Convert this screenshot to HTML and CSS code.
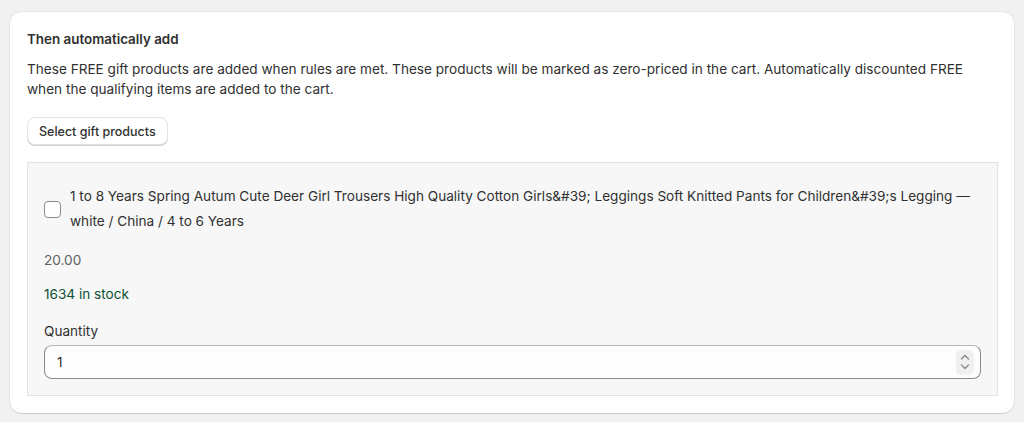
FILE: index.html
```html
<!DOCTYPE html>
<html lang="en">
<head>
  <meta charset="UTF-8">
  <title>Gift products</title>
  <link rel="stylesheet" href="styles.css">
</head>
<body>
  <div class="card">
    <h2 class="card-title">Then automatically add</h2>
    <p class="card-text">These FREE gift products are added when rules are met. These products will be marked as zero-priced in the cart. Automatically discounted FREE when the qualifying items are added to the cart.</p>
    <button class="select-button">Select gift products</button>

    <div class="gift-box">
      <label class="gift-item">
        <span class="checkbox"></span>
        <span class="gift-name">1 to 8 Years Spring Autum Cute Deer Girl Trousers High Quality Cotton Girls&amp;#39; Leggings Soft Knitted Pants for Children&amp;#39;s Legging — white / China / 4 to 6 Years</span>
      </label>
      <div class="gift-price">20.00</div>
      <div class="gift-stock">1634 in stock</div>
      <div class="field-label">Quantity</div>
      <div class="number-field">
        <input class="number-input" type="text" value="1">
        <span class="spinner">
          <svg width="14" height="22" viewBox="0 0 14 22" fill="none" stroke="#8a8a8a" stroke-width="1.4" stroke-linecap="round" stroke-linejoin="round">
            <path d="M3.5 8 L7 4.5 L10.5 8"/>
            <path d="M3.5 14 L7 17.5 L10.5 14"/>
          </svg>
        </span>
      </div>
    </div>
  </div>
</body>
</html>
```

FILE: styles.css
```css
body {
  margin: 0;
  padding: 12px 10px 9px;
  background-color: #f1f1f1;
  color: #303030;
  font-family: Inter, 'Noto Sans', sans-serif;
  font-size: 13.6px;
}

.card {
  background: #ffffff;
  border-radius: 12px;
  box-shadow: 0 1px 0 rgba(0, 0, 0, 0.12), 0 0 0 1px rgba(0, 0, 0, 0.04);
  padding: 17px 16px 17px 17px;
}

.card-title {
  margin: 0;
  font-size: 13.4px;
  font-weight: 600;
  line-height: 20px;
}

.card-text {
  margin: 10px 0 0;
  line-height: 20px;
  padding-right: 20px;
}

.select-button {
  margin-top: 18px;
  height: 28px;
  padding: 0 11px;
  font-family: inherit;
  font-size: 12.5px;
  font-weight: 500;
  color: #303030;
  background: #ffffff;
  border: 1px solid #e3e3e3;
  border-radius: 8px;
  box-shadow: 0 1px 0 #cfcfcf;
  cursor: pointer;
}

.gift-box {
  margin-top: 17px;
  background: #f7f7f7;
  border: 1px solid #e3e3e3;
  padding: 21px 16px 16px;
}

.gift-item {
  display: flex;
  align-items: center;
  gap: 9px;
}

.checkbox {
  flex: none;
  width: 15px;
  height: 15px;
  border: 1px solid #8a8a8a;
  border-radius: 4px;
  background: #ffffff;
}

.gift-name {
  line-height: 25px;
  color: #303030;
}

.gift-price {
  margin-top: 16px;
  line-height: 20px;
  color: #616161;
}

.gift-stock {
  margin-top: 14px;
  line-height: 20px;
  color: #0c5132;
}

.field-label {
  margin-top: 17px;
  line-height: 20px;
}

.number-field {
  margin-top: 4px;
  display: flex;
  align-items: center;
  height: 32px;
  background: #fdfdfd;
  border: 1px solid #8a8a8a;
  border-top-color: #b5b5b5;
  border-radius: 8px;
  padding: 0 6px 0 12px;
}

.number-input {
  flex: 1;
  border: none;
  background: transparent;
  font-family: inherit;
  font-size: 13.6px;
  color: #303030;
  padding: 0;
  outline: none;
}

.spinner {
  display: flex;
  align-items: center;
  justify-content: center;
  width: 18px;
  height: 25px;
  border-radius: 5px;
  background: #f0f0f0;
}
```
